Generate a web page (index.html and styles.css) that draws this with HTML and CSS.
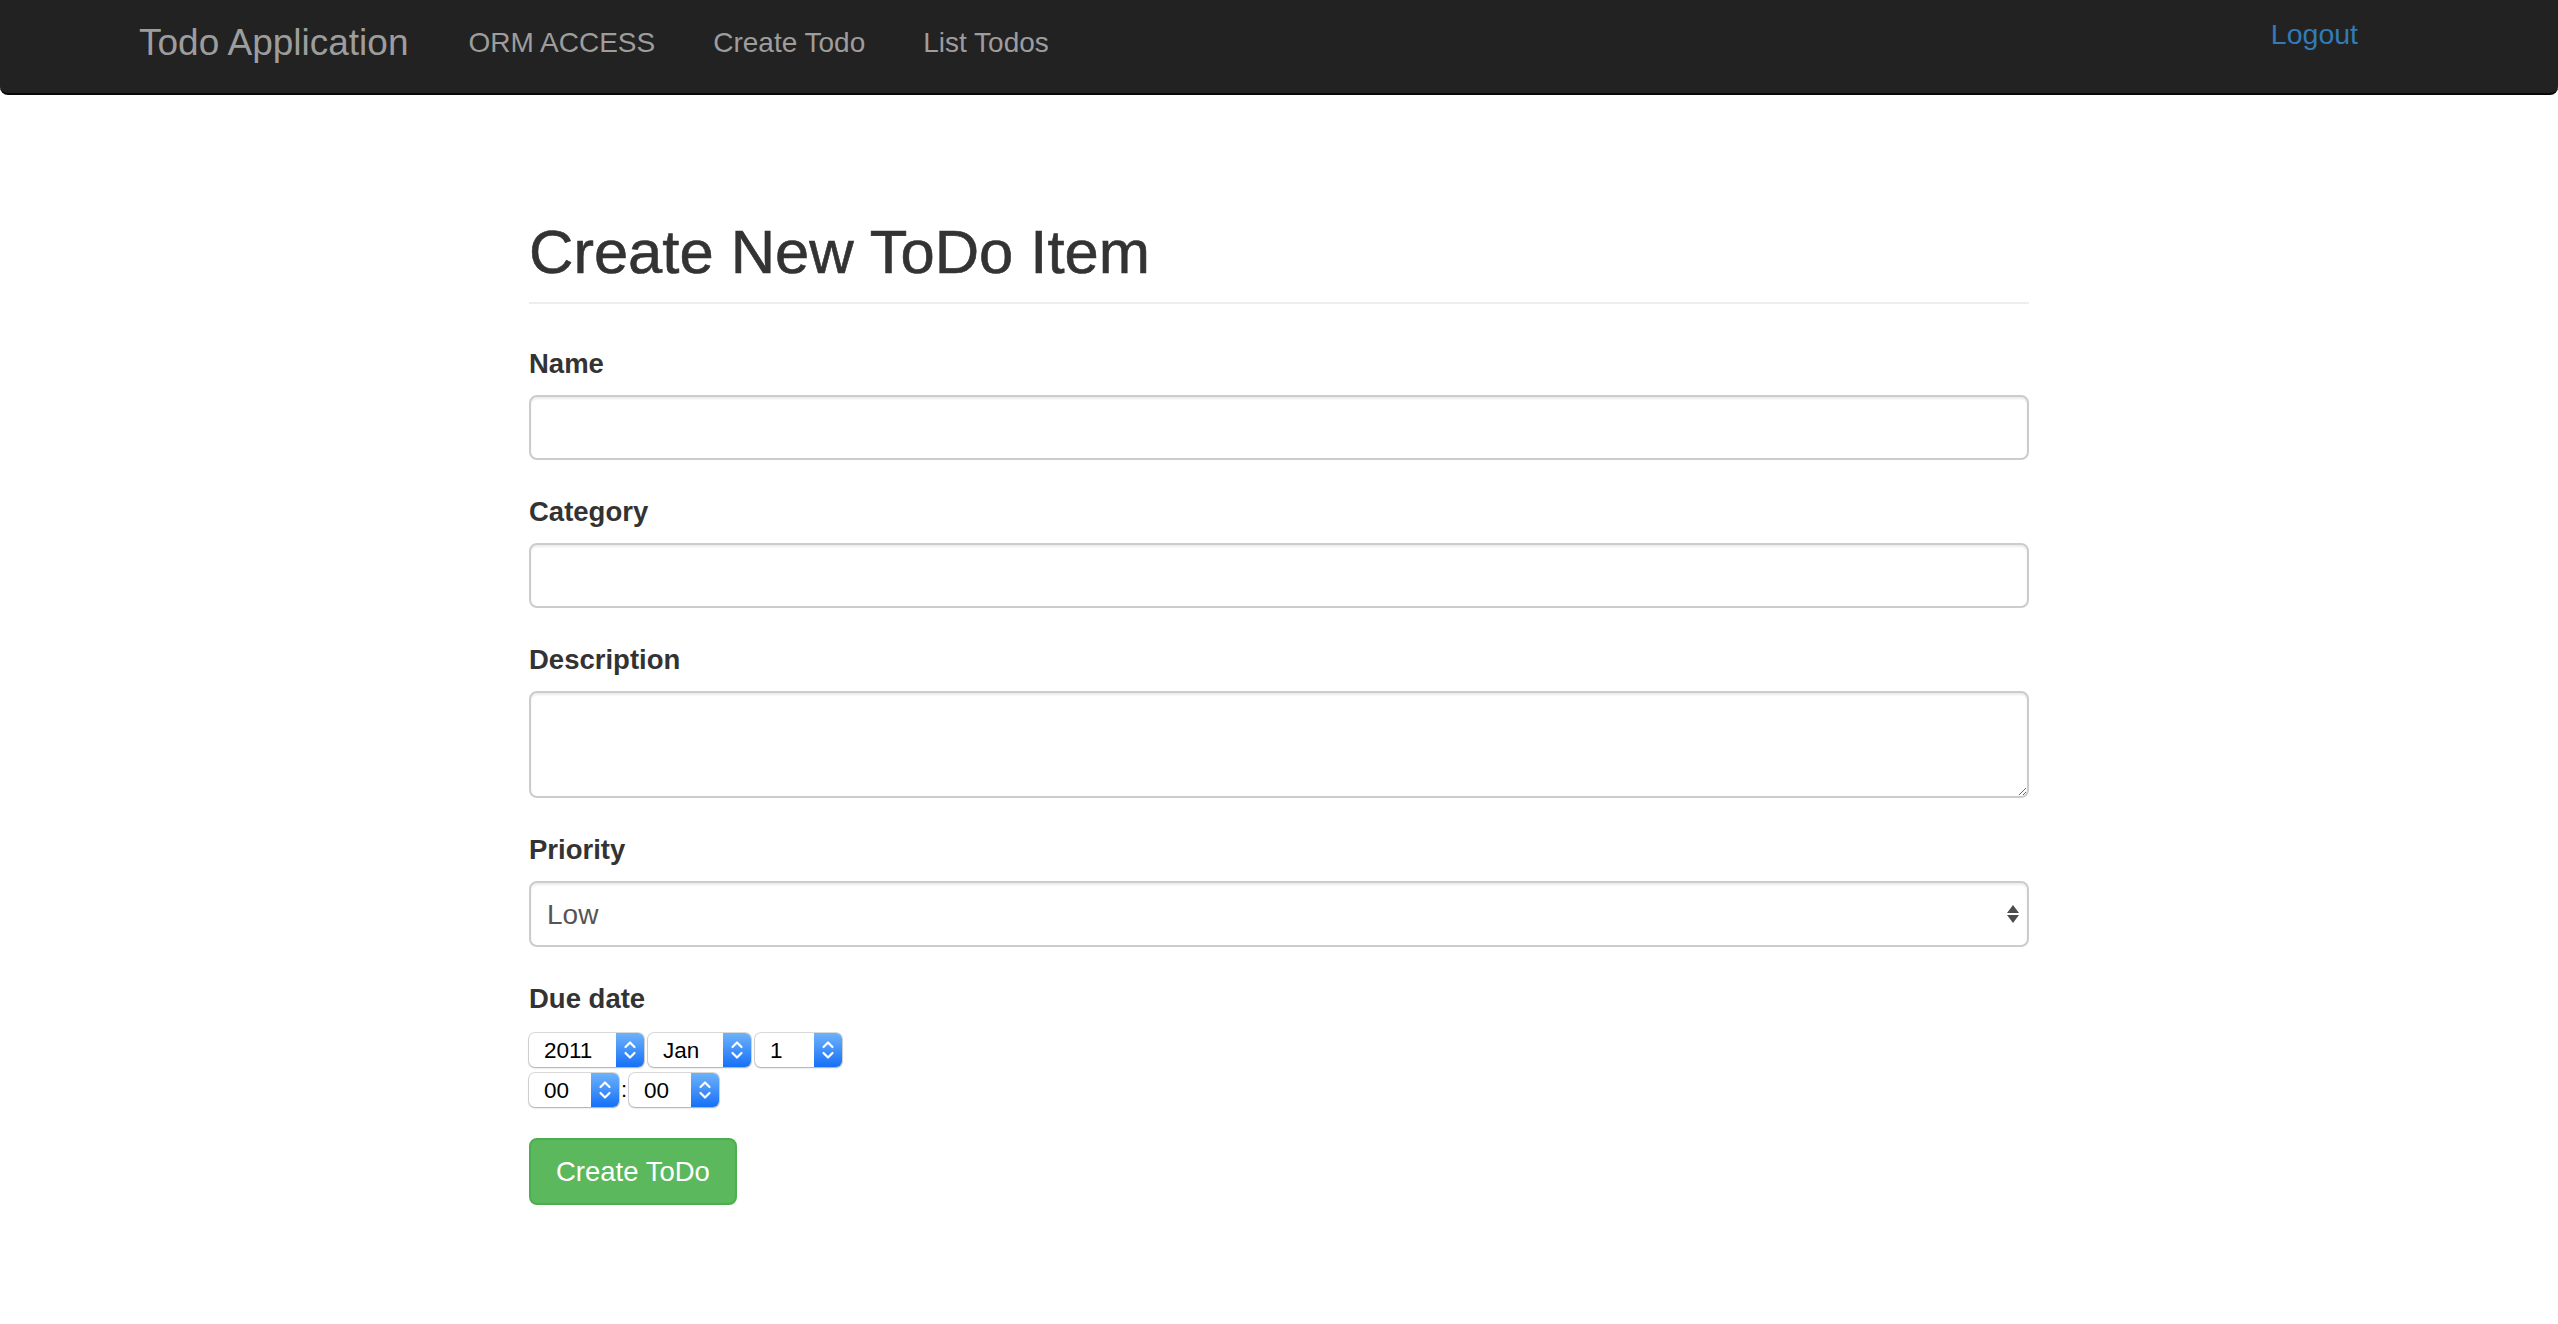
FILE: index.html
```
<!DOCTYPE html>
<html lang="en">
<head>
<meta charset="utf-8">
<title>Todo Application</title>
<link rel="stylesheet" href="styles.css">
</head>
<body>
<nav class="navbar">
  <a class="brand" href="#">Todo Application</a>
  <ul class="nav-links">
    <li><a href="#">ORM ACCESS</a></li>
    <li><a href="#">Create Todo</a></li>
    <li><a href="#">List Todos</a></li>
  </ul>
  <a class="logout" href="#">Logout</a>
</nav>

<main class="container">
  <h1 class="page-title">Create New ToDo Item</h1>
  <form class="todo-form">
    <div class="form-group">
      <label for="name">Name</label>
      <input id="name" class="form-control" type="text">
    </div>
    <div class="form-group">
      <label for="category">Category</label>
      <input id="category" class="form-control" type="text">
    </div>
    <div class="form-group">
      <label for="description">Description</label>
      <textarea id="description" class="form-control textarea"></textarea>
    </div>
    <div class="form-group">
      <label for="priority">Priority</label>
      <div class="select-wrap">
        <select id="priority" class="select-plain">
          <option>Low</option>
          <option>Medium</option>
          <option>High</option>
        </select>
        <svg class="select-arrows" width="14" height="20" viewBox="0 0 14 20">
          <path d="M7 1 L13 9 L1 9 Z" fill="#4d4d4d"/>
          <path d="M1 11 L13 11 L7 19 Z" fill="#4d4d4d"/>
        </svg>
      </div>
    </div>
    <div class="form-group date-group">
      <label>Due date</label>
      <div class="date-fields">
        <div class="date-row">
          <span class="mac-select w-year"><select class="mac-native"><option>2011</option></select><span class="stepper"><svg width="14" height="22" viewBox="0 0 14 22"><path d="M2.5 8 L7 3.5 L11.5 8 M2.5 14 L7 18.5 L11.5 14" fill="none" stroke="#fff" stroke-width="2.2" stroke-linecap="round" stroke-linejoin="round"/></svg></span></span>
          <span class="mac-select w-month"><select class="mac-native"><option>Jan</option></select><span class="stepper"><svg width="14" height="22" viewBox="0 0 14 22"><path d="M2.5 8 L7 3.5 L11.5 8 M2.5 14 L7 18.5 L11.5 14" fill="none" stroke="#fff" stroke-width="2.2" stroke-linecap="round" stroke-linejoin="round"/></svg></span></span>
          <span class="mac-select w-day"><select class="mac-native"><option>1</option></select><span class="stepper"><svg width="14" height="22" viewBox="0 0 14 22"><path d="M2.5 8 L7 3.5 L11.5 8 M2.5 14 L7 18.5 L11.5 14" fill="none" stroke="#fff" stroke-width="2.2" stroke-linecap="round" stroke-linejoin="round"/></svg></span></span>
        </div>
        <div class="date-row time-row">
          <span class="mac-select w-time"><select class="mac-native"><option>00</option></select><span class="stepper"><svg width="14" height="22" viewBox="0 0 14 22"><path d="M2.5 8 L7 3.5 L11.5 8 M2.5 14 L7 18.5 L11.5 14" fill="none" stroke="#fff" stroke-width="2.2" stroke-linecap="round" stroke-linejoin="round"/></svg></span></span>
          <span class="colon">:</span>
          <span class="mac-select w-time"><select class="mac-native"><option>00</option></select><span class="stepper"><svg width="14" height="22" viewBox="0 0 14 22"><path d="M2.5 8 L7 3.5 L11.5 8 M2.5 14 L7 18.5 L11.5 14" fill="none" stroke="#fff" stroke-width="2.2" stroke-linecap="round" stroke-linejoin="round"/></svg></span></span>
        </div>
      </div>
    </div>
    <button type="submit" class="btn-success">Create ToDo</button>
  </form>
</main>
</body>
</html>
```

FILE: styles.css
```
html, body {
  margin: 0;
  padding: 0;
  background: #fff;
}

body {
  font-family: "Liberation Sans", Arial, Helvetica, sans-serif;
  color: #333;
}

a {
  text-decoration: none;
}

/* ---------- navbar ---------- */
.navbar {
  display: flex;
  align-items: flex-start;
  height: 95px;
  box-sizing: border-box;
  background: #222;
  border-bottom: 2px solid #080808;
  border-radius: 0 0 8px 8px;
  padding: 0 200px 0 139px;
}

.brand {
  font-size: 37px;
  line-height: 37px;
  color: #9d9d9d;
  margin-top: 24px;
  margin-right: 60px;
}

.nav-links {
  display: flex;
  gap: 58px;
  list-style: none;
  margin: 0;
  padding: 0;
}

.nav-links a {
  display: block;
  font-size: 28px;
  line-height: 28px;
  color: #9d9d9d;
  margin-top: 29px;
}

.logout {
  margin-left: auto;
  font-size: 28.5px;
  line-height: 28.5px;
  color: #337ab7;
  margin-top: 20px;
}

/* ---------- content ---------- */
.container {
  width: 1500px;
  margin: 0 auto;
  padding-top: 123px;
}

.page-title {
  font-size: 61.5px;
  line-height: 67px;
  font-weight: normal;
  -webkit-text-stroke: 0.6px #333;
  color: #333;
  margin: 0 0 40px 0;
  padding-bottom: 17px;
  border-bottom: 2px solid #eee;
}

.form-group {
  margin-bottom: 32px;
}

.form-group label {
  display: block;
  font-size: 27.5px;
  line-height: 40px;
  font-weight: bold;
  color: #333;
  margin-bottom: 11px;
}

.form-control {
  display: block;
  width: 100%;
  height: 65px;
  box-sizing: border-box;
  border: 2px solid #ccc;
  border-radius: 8px;
  box-shadow: inset 0 2px 2px rgba(0, 0, 0, 0.075);
  padding: 12px 17px;
  font-family: "Liberation Sans", Arial, sans-serif;
  font-size: 28px;
  color: #555;
  background: #fff;
  outline: none;
}

.textarea {
  height: 107px;
  resize: vertical;
}

.select-wrap {
  display: flex;
  align-items: center;
  height: 66px;
  box-sizing: border-box;
  border: 2px solid #ccc;
  border-radius: 8px;
  box-shadow: inset 0 2px 2px rgba(0, 0, 0, 0.075);
  background: #fff;
}

.select-plain {
  flex: 1;
  appearance: none;
  -webkit-appearance: none;
  border: none;
  background: transparent;
  font-family: "Liberation Sans", Arial, sans-serif;
  font-size: 28px;
  color: #555;
  padding: 0 0 0 16px;
  height: 100%;
  outline: none;
}

.select-arrows {
  margin-right: 7px;
}

/* ---------- date selects ---------- */
.date-group {
  margin-bottom: 31px;
}

.date-fields {
  display: flex;
  flex-direction: column;
  gap: 6px;
  padding-top: 3px;
}

.date-row {
  display: flex;
  align-items: center;
  gap: 4px;
}

.time-row {
  gap: 0;
}

.mac-select {
  display: inline-flex;
  height: 34px;
  box-sizing: border-box;
  border-radius: 6px;
  background: #fff;
  box-shadow: 0 0 0 1px rgba(0, 0, 0, 0.14), 0 1px 2px rgba(0, 0, 0, 0.22);
  overflow: hidden;
}

.w-year { width: 115px; }
.w-month { width: 103px; }
.w-day { width: 87px; }
.w-time { width: 90px; }

.mac-native {
  flex: 1;
  min-width: 0;
  appearance: none;
  -webkit-appearance: none;
  border: none;
  background: transparent;
  font-family: "Liberation Sans", Arial, sans-serif;
  font-size: 22.5px;
  color: #000;
  padding: 0 0 0 15px;
  height: 100%;
  outline: none;
}

.stepper {
  width: 28px;
  flex: none;
  display: flex;
  align-items: center;
  justify-content: center;
  background: linear-gradient(#6db3fb, #1670f7);
}

.colon {
  font-size: 22px;
  color: #000;
  width: 10px;
  text-align: center;
}

/* ---------- button ---------- */
.btn-success {
  display: inline-block;
  height: 67px;
  padding: 0 25px;
  box-sizing: border-box;
  border: 2px solid #4cae4c;
  border-radius: 8px;
  background: #5cb85c;
  color: #fff;
  font-family: "Liberation Sans", Arial, sans-serif;
  font-size: 27.5px;
  cursor: pointer;
}
```
